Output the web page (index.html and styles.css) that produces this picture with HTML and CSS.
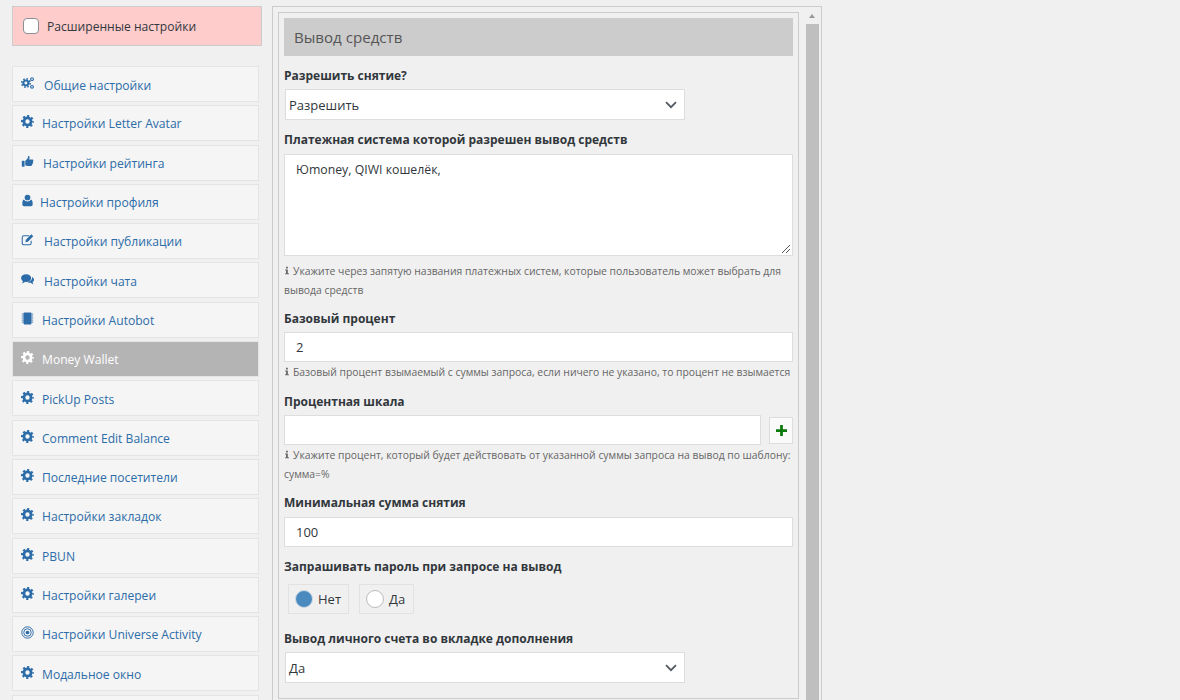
FILE: index.html
```html
<!DOCTYPE html>
<html lang="ru">
<head>
<meta charset="utf-8">
<title>Money Wallet</title>
<link rel="stylesheet" href="styles.css">
</head>
<body>
<svg class="defs" width="0" height="0" aria-hidden="true">
  <symbol id="i-cog" viewBox="0 0 16 16">
    <circle cx="8" cy="8" r="4.4" fill="none" stroke="currentColor" stroke-width="3.4"/>
    <circle cx="8" cy="8" r="6.7" fill="none" stroke="currentColor" stroke-width="2.6" stroke-dasharray="2.63 2.63" stroke-dashoffset="1.3"/>
  </symbol>
  <symbol id="i-cogs" viewBox="0 0 16 16">
    <circle cx="5.6" cy="8" r="2.9" fill="none" stroke="currentColor" stroke-width="2.4"/>
    <circle cx="5.6" cy="8" r="4.8" fill="none" stroke="currentColor" stroke-width="1.8" stroke-dasharray="1.88 1.88"/>
    <circle cx="12.6" cy="3.6" r="1.6" fill="none" stroke="currentColor" stroke-width="1.3"/>
    <circle cx="12.6" cy="12.4" r="1.6" fill="none" stroke="currentColor" stroke-width="1.3"/>
  </symbol>
  <symbol id="i-thumb" viewBox="0 0 16 16">
    <rect x="1" y="7" width="3.4" height="7.4" rx=".5" fill="currentColor"/>
    <path d="M5.2 7.4 8 4.4c.5-.7.6-1.6.6-2.6 0-.6 1-.8 1.5-.2.8.9.6 2.6-.2 4h4.2c1.3 0 1.5 1.6.6 2.1.6.7.4 1.7-.3 2 .3.8 0 1.6-.7 1.8.2 1.100-.4 1.900-1.500 1.900H8.500c-1.200 0-2.300-.5-3.300-.8z" fill="currentColor"/>
  </symbol>
  <symbol id="i-user" viewBox="0 0 16 16">
    <circle cx="8" cy="4.300" r="3.500" fill="currentColor"/>
    <path d="M3.500 6.800c1 1.600 2.700 2.300 4.500 2.300s3.500-.7 4.500-2.300c1.100.4 1.900 2.200 1.900 5.400 0 1.700-.9 2.800-2.300 2.800H3.900c-1.400 0-2.300-1.100-2.300-2.800 0-3.200.8-5 1.900-5.400z" fill="currentColor"/>
  </symbol>
  <symbol id="i-edit" viewBox="0 0 16 16">
    <path d="M12.500 9.500v3c0 1.100-.9 2-2 2h-7c-1.100 0-2-.9-2-2v-7c0-1.100.9-2 2-2h6.500" fill="none" stroke="currentColor" stroke-width="1.300"/>
    <path d="M6 8.300 12.700 1.600l2.400 2.400-6.700 6.700-3 .6z" fill="currentColor"/>
  </symbol>
  <symbol id="i-chat" viewBox="0 0 16 16">
    <ellipse cx="6.300" cy="6.300" rx="6.200" ry="4.800" fill="currentColor"/>
    <path d="M2.500 9.500 1.500 12.800 6 10.500zM13.600 4.800c1.500.8 2.400 2 2.400 3.400 0 1.200-.7 2.300-1.800 3l1 2.800-3.400-2.100c-1.500.2-3.400-.1-4.500-1 3.500-.1 6.800-2.300 6.300-6.100z" fill="currentColor"/>
  </symbol>
  <symbol id="i-chip" viewBox="0 0 16 16">
    <rect x="3.200" y="0.500" width="9.600" height="15" rx="1" fill="currentColor"/>
    <path d="M1 2.500h2.500M1 5h2.500M1 7.500h2.500M1 10h2.500M1 12.500h2.500M12.500 2.500H15M12.500 5H15M12.500 7.500H15M12.500 10H15M12.500 12.500H15" stroke="currentColor" stroke-width="1" fill="none"/>
  </symbol>
  <symbol id="i-target" viewBox="0 0 16 16">
    <circle cx="8" cy="8" r="7" fill="none" stroke="currentColor" stroke-width="1.200"/>
    <circle cx="8" cy="8" r="4.600" fill="none" stroke="currentColor" stroke-width="1.200"/>
    <circle cx="8" cy="8" r="2.300" fill="currentColor"/>
  </symbol>
  <symbol id="i-info" viewBox="0 0 8 10">
    <path d="M1.500 3.500h3.600v5h1.400V10H1.500V8.500h1.200V5H1.500zM2.700 0h2.400v2.300H2.700z" fill="currentColor"/>
  </symbol>
  <symbol id="i-chev" viewBox="0 0 12 8">
    <path d="M1 1.200 6 6.200l5-5" fill="none" stroke="currentColor" stroke-width="1.700"/>
  </symbol>
</svg>

<div class="page">
  <aside class="side">
    <label class="adv"><span class="adv-box"></span><span>Расширенные настройки</span></label>
    <nav class="menu">
      <a class="item"><svg class="ic ic-l"><use href="#i-cogs"/></svg><span class="t t-w">Общие настройки</span></a>
      <a class="item"><svg class="ic"><use href="#i-cog"/></svg><span class="t">Настройки Letter Avatar</span></a>
      <a class="item"><svg class="ic"><use href="#i-thumb"/></svg><span class="t t-s">Настройки рейтинга</span></a>
      <a class="item"><svg class="ic"><use href="#i-user"/></svg><span class="t t-u">Настройки профиля</span></a>
      <a class="item"><svg class="ic"><use href="#i-edit"/></svg><span class="t t-e">Настройки публикации</span></a>
      <a class="item"><svg class="ic"><use href="#i-chat"/></svg><span class="t t-e">Настройки чата</span></a>
      <a class="item"><svg class="ic"><use href="#i-chip"/></svg><span class="t">Настройки Autobot</span></a>
      <a class="item active"><svg class="ic"><use href="#i-cog"/></svg><span class="t">Money Wallet</span></a>
      <a class="item"><svg class="ic"><use href="#i-cog"/></svg><span class="t">PickUp Posts</span></a>
      <a class="item"><svg class="ic"><use href="#i-cog"/></svg><span class="t">Comment Edit Balance</span></a>
      <a class="item"><svg class="ic"><use href="#i-cog"/></svg><span class="t">Последние посетители</span></a>
      <a class="item"><svg class="ic"><use href="#i-cog"/></svg><span class="t">Настройки закладок</span></a>
      <a class="item"><svg class="ic"><use href="#i-cog"/></svg><span class="t">PBUN</span></a>
      <a class="item"><svg class="ic"><use href="#i-cog"/></svg><span class="t">Настройки галереи</span></a>
      <a class="item"><svg class="ic"><use href="#i-target"/></svg><span class="t">Настройки Universe Activity</span></a>
      <a class="item"><svg class="ic"><use href="#i-cog"/></svg><span class="t">Модальное окно</span></a>
      <a class="item"></a>
    </nav>
  </aside>

  <main class="panel">
    <section class="box">
      <h3 class="head">Вывод средств</h3>

      <div class="label l-first">Разрешить снятие?</div>
      <div class="select">Разрешить<svg class="chev"><use href="#i-chev"/></svg></div>

      <div class="label l-2">Платежная система которой разрешен вывод средств</div>
      <div class="textarea">Юmoney, QIWI кошелёк,
        <svg class="grip" viewBox="0 0 10 10"><path d="M9 1 1 9M9 5 5 9" stroke="#555" stroke-width="1" fill="none"/></svg>
      </div>
      <p class="help help-wide"><svg class="inf"><use href="#i-info"/></svg>Укажите через запятую названия платежных систем, которые пользователь может выбрать для вывода средств</p>

      <div class="label l-3">Базовый процент</div>
      <div class="input">2</div>
      <p class="help"><svg class="inf"><use href="#i-info"/></svg>Базовый процент взымаемый с суммы запроса, если ничего не указано, то процент не взымается</p>

      <div class="label l-4">Процентная шкала</div>
      <div class="row">
        <div class="input grow"></div>
        <div class="plus"><svg viewBox="0 0 12 12" width="11" height="11"><path d="M4.500 0h3v4.500H12v3H7.500V12h-3V7.500H0v-3h4.500z" fill="#0a7a0a"/></svg></div>
      </div>
      <p class="help"><svg class="inf"><use href="#i-info"/></svg>Укажите процент, который будет действовать от указанной суммы запроса на вывод по шаблону: сумма=%</p>

      <div class="label l-5">Минимальная сумма снятия</div>
      <div class="input">100</div>

      <div class="label l-6">Запрашивать пароль при запросе на вывод</div>
      <div class="radios">
        <div class="radio r-no"><span class="dot on"></span>Нет</div>
        <div class="radio r-yes"><span class="dot"></span>Да</div>
      </div>

      <div class="label l-7">Вывод личного счета во вкладке дополнения</div>
      <div class="select">Да<svg class="chev"><use href="#i-chev"/></svg></div>
    </section>
    <div class="scroll">
      <span class="arrow"></span>
      <span class="thumb"></span>
    </div>
  </main>
</div>
</body>
</html>
```
FILE: styles.css
```css
* { box-sizing: border-box; }
html, body { margin: 0; height: 700px; overflow: hidden; }
body { background: #f0f0f0; font-family: "Open Sans", sans-serif; font-size: 13px; color: #32373c; }
.defs { position: absolute; }
.page { display: flex; align-items: flex-start; padding: 6px 0 0 12px; height: 700px; overflow: hidden; }

.side { width: 250px; flex: none; }
.adv { display: flex; align-items: center; height: 40px; padding-left: 10px; background: #ffcccc; border: 1px solid #ccc; color: #32373c; font-size: 12.1px; }
.adv-box { width: 16px; height: 16px; margin-right: 8px; background: #fff; border: 1px solid #8c8f94; border-radius: 4px; }
.menu { width: 247px; margin-top: 20px; display: flex; flex-direction: column; gap: 3.3px; }
.item { display: flex; align-items: center; flex: none; height: 36px; padding-left: 8px; padding-top: 1.4px; background: #f5f5f5; border: 1px solid #e4e4e4; color: #2c6ca8; font-size: 12.1px; }
.item .ic { width: 13px; height: 13px; margin-right: 8px; margin-top: -4px; flex: none; }
.item .ic-l { width: 14px; height: 14px; margin-right: 8px; }
.t-w { margin-left: 1px; padding-top: 2px; }
.t-s { margin-left: 1px; }
.t-u { margin-left: -2px; }
.t-e { margin-left: 2px; }
.item.active { background: #b4b4b4; color: #fff; border-color: #e4e4e4; }

.panel { width: 550px; margin-left: 10px; flex: none; display: flex; align-items: flex-start; height: 800px; padding: 5px 2px 0 5px; border: 1px solid #ccc; background: #f0f0f0; }
.box { width: 521px; height: 687px; flex: none; padding: 5px; border: 1px solid #ccc; }
.head { margin: 0; height: 38px; background: #ccc; padding-left: 10px; font-size: 15.1px; line-height: 38px; font-weight: 400; color: #555; }

.label { font-weight: 700; font-size: 12px; line-height: 18px; color: #32373c; }
.l-first { margin-top: 11px; margin-bottom: 4px; }
.l-2 { margin-top: 11px; margin-bottom: 5px; }
.l-3 { margin-top: 10px; margin-bottom: 4px; }
.l-4 { margin-top: 11px; margin-bottom: 4px; }
.l-5 { margin-top: 10px; margin-bottom: 5px; }
.l-6 { margin-top: 11px; margin-bottom: 8px; }
.l-7 { margin-top: 16px; margin-bottom: 4px; }

.select { position: relative; display: flex; align-items: center; width: 400px; height: 31px; margin-left: 1px; padding-left: 3px; background: #fff; border: 1px solid #ddd; font-size: 13px; }
.chev { position: absolute; right: 7px; top: 11px; width: 12px; height: 8px; color: #50575e; }

.textarea { position: relative; height: 102px; padding: 6px 11px; background: #fff; border: 1px solid #ddd; font-size: 12.3px; line-height: 18px; }
.grip { position: absolute; right: 1px; bottom: 1px; width: 10px; height: 10px; }

.help { margin: 1px 0 0; font-size: 10.36px; line-height: 19px; color: #666; }
.help-wide { margin-top: 6px; }
.inf { width: 6px; height: 9px; margin: 0 3px 0 0; color: #666; }

.input { height: 30px; padding-left: 11px; background: #fff; border: 1px solid #ddd; font-size: 13px; line-height: 28px; }
.row { display: flex; align-items: center; gap: 8px; }
.grow { flex: 1; }
.plus { display: flex; align-items: center; justify-content: center; width: 24px; height: 27px; background: #fafafa; border: 1px solid #ddd; }

.radios { display: flex; gap: 10px; margin-left: 4px; }
.radio { display: flex; align-items: center; height: 30px; padding-left: 6px; border: 1px solid #e2e2e2; font-size: 13px; }
.r-no { width: 61px; }
.r-yes { width: 55px; }
.dot { width: 18px; height: 18px; margin-right: 5px; border-radius: 50%; background: #fff; border: 1px solid #bbb; }
.dot.on { background: #4a8abf; border-color: #cfdbe6; }

.scroll { position: relative; margin-left: 7px; width: 13px; flex: none; height: 790px; }
.arrow { position: absolute; left: 3px; top: 2px; width: 0; height: 0; border-left: 3.5px solid transparent; border-right: 3.5px solid transparent; border-bottom: 4px solid #999; }
.thumb { position: absolute; left: 0; top: 12px; width: 13px; bottom: 0; background: #bfbfbf; }
```
